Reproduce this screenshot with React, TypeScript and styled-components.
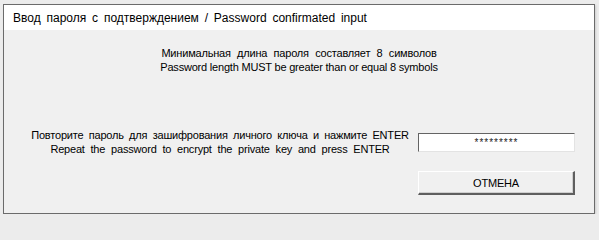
import React from "react";
import styled, { createGlobalStyle } from "styled-components";

const GlobalStyle = createGlobalStyle`
  html, body {
    margin: 0;
    padding: 0;
    background: #ececec;
  }
  body {
    font-family: "Liberation Sans", Arial, sans-serif;
    color: #000;
  }
`;

const Window = styled.div`
  margin: 4px 0 0 3px;
  width: 590px;
  height: 208px;
  border: 1px solid #6b6b6b;
  background: #f0f0f0;
  display: flex;
  flex-direction: column;
  box-shadow: 1px 1px 2px rgba(0, 0, 0, 0.12);
`;

const TitleBar = styled.div`
  flex-shrink: 0;
  height: 25px;
  background: #fff;
  display: flex;
  align-items: center;
  padding-left: 9px;
  font-size: 12px;
  word-spacing: 2.5px;
`;

const Body = styled.div`
  flex: 1;
  display: flex;
  flex-direction: column;
  padding-top: 16px;
`;

const Info = styled.div`
  text-align: center;
  font-size: 11px;
  line-height: 14px;
  letter-spacing: -0.2px;
`;

const Line = styled.div<{ $gap: number }>`
  white-space: nowrap;
  word-spacing: ${(p) => p.$gap}px;
`;

const Form = styled.div`
  margin-top: 53px;
  display: grid;
  grid-template-columns: 390px 157px;
  justify-content: end;
  column-gap: 3px;
  row-gap: 15px;
  padding-right: 19px;
`;

const Label = styled.div`
  padding-top: 1px;
  text-align: center;
  font-size: 11px;
  line-height: 14px;
  letter-spacing: -0.2px;
`;

const PasswordField = styled.div`
  margin-top: 6px;
  height: 17px;
  background: #fff;
  border-top: 1px solid #646464;
  border-left: 1px solid #646464;
  border-bottom: 1px solid #e3e3e3;
  border-right: 1px solid #e3e3e3;
  display: flex;
  align-items: center;
  justify-content: center;
  font-size: 10px;
  letter-spacing: 1px;
  color: #222;
`;

const Button = styled.button`
  grid-column: 2;
  height: 24px;
  padding: 0;
  background: #f0f0f0;
  border-top: 1px solid #fff;
  border-left: 1px solid #fff;
  border-bottom: 2px solid #5f5f5f;
  border-right: 2px solid #5f5f5f;
  box-shadow: inset -1px -1px 0 #cfcfcf;
  font-family: "Liberation Sans", Arial, sans-serif;
  font-size: 11px;
  letter-spacing: -0.2px;
  color: #000;
`;

const App = () => {
  return (
    <>
      <GlobalStyle />
      <Window>
        <TitleBar>Ввод пароля с подтверждением / Password confirmated input</TitleBar>
        <Body>
          <Info>
            <Line $gap={3.5}>Минимальная длина пароля составляет 8 символов</Line>
            <Line $gap={0}>Password length MUST be greater than or equal 8 symbols</Line>
          </Info>
          <Form>
            <Label>
              <Line $gap={2.5}>Повторите пароль для зашифрования личного ключа и нажмите ENTER</Line>
              <Line $gap={3}>Repeat the password to encrypt the private key and press ENTER</Line>
            </Label>
            <PasswordField>*********</PasswordField>
            <Button>ОТМЕНА</Button>
          </Form>
        </Body>
      </Window>
    </>
  );
};

export default App;
